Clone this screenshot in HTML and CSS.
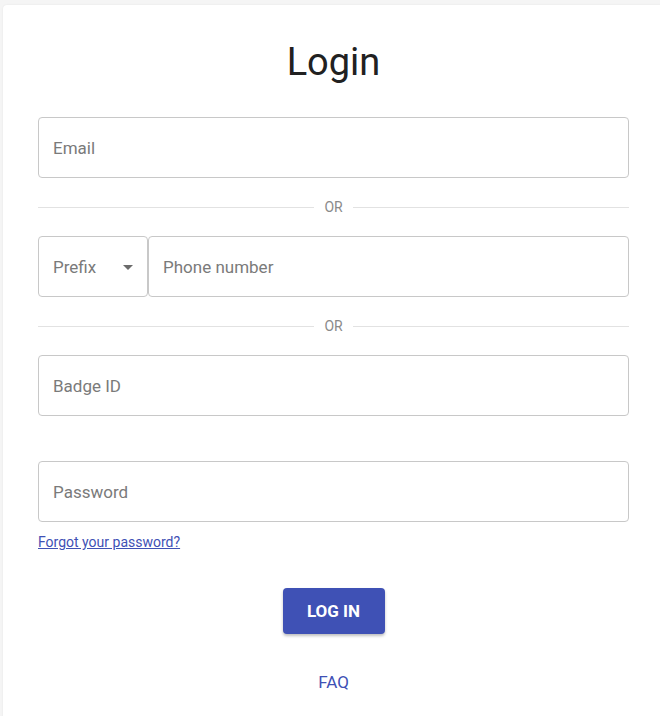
FILE: index.html
```html
<!DOCTYPE html>
<html lang="en">
<head>
  <meta charset="UTF-8">
  <meta name="viewport" content="width=device-width, initial-scale=1.0">
  <title>Login</title>
  <link rel="stylesheet" href="styles.css">
</head>
<body>
  <div class="card">
    <h1 class="title">Login</h1>

    <input class="field" type="email" placeholder="Email">

    <div class="divider"><span>OR</span></div>

    <div class="phone-row">
      <div class="field prefix">
        <span>Prefix</span>
        <svg class="caret" width="24" height="24" viewBox="0 0 24 24"><path d="M7 10l5 5 5-5z"/></svg>
      </div>
      <input class="field phone" type="tel" placeholder="Phone number">
    </div>

    <div class="divider"><span>OR</span></div>

    <input class="field" type="text" placeholder="Badge ID">

    <input class="field password" type="password" placeholder="Password">
    <a class="forgot" href="#">Forgot your password?</a>

    <div class="actions">
      <button class="login-btn">LOG IN</button>
      <a class="faq" href="#">FAQ</a>
    </div>
  </div>
</body>
</html>
```

FILE: styles.css
```css
* {
  margin: 0;
  padding: 0;
  box-sizing: border-box;
}

body {
  font-family: Roboto, "Noto Sans", sans-serif;
  background-color: #f5f5f5;
  overflow: hidden;
  height: 100vh;
}

.card {
  width: 661px;
  min-height: 720px;
  margin: 5px 0 0 3px;
  padding: 35px 35px 0 35px;
  background-color: #fff;
  border-radius: 4px;
  box-shadow: 0 0 2px rgba(0, 0, 0, 0.08);
  display: flex;
  flex-direction: column;
}

.title {
  font-size: 38px;
  font-weight: 400;
  line-height: 45px;
  color: #212121;
  text-align: center;
  margin-bottom: 32px;
}

.field {
  height: 61px;
  width: 100%;
  border: 1px solid #c8c8c8;
  border-radius: 4px;
  padding: 0 14px;
  font-family: inherit;
  font-size: 17px;
  color: #212121;
  background: #fff;
  outline: none;
}

.field::placeholder {
  color: #7a7a7a;
}

.divider {
  height: 58px;
  display: flex;
  align-items: center;
  gap: 10px;
  font-size: 14px;
  color: #8a8a8a;
}

.divider::before,
.divider::after {
  content: "";
  flex: 1;
  height: 1px;
  background-color: #e2e2e2;
}

.phone-row {
  display: flex;
}

.prefix {
  width: 110px;
  flex-shrink: 0;
  display: flex;
  align-items: center;
  justify-content: space-between;
  padding-right: 7px;
  color: #7a7a7a;
}

.caret {
  fill: #6b6b6b;
}

.phone {
  flex: 1;
  width: auto;
}

.password {
  margin-top: 45px;
}

.forgot {
  align-self: flex-start;
  margin-top: 10px;
  font-size: 14px;
  line-height: 20px;
  color: #3f51b5;
}

.actions {
  display: flex;
  flex-direction: column;
  align-items: center;
}

.login-btn {
  margin-top: 36px;
  width: 102px;
  height: 46px;
  border: none;
  border-radius: 4px;
  background-color: #3f51b5;
  color: #fff;
  font-family: inherit;
  font-size: 17px;
  font-weight: 700;
  box-shadow: 0 2px 3px rgba(0, 0, 0, 0.25);
  cursor: pointer;
}

.faq {
  margin-top: 38px;
  font-size: 17px;
  line-height: 20px;
  color: #3f51b5;
  text-decoration: none;
}
```
